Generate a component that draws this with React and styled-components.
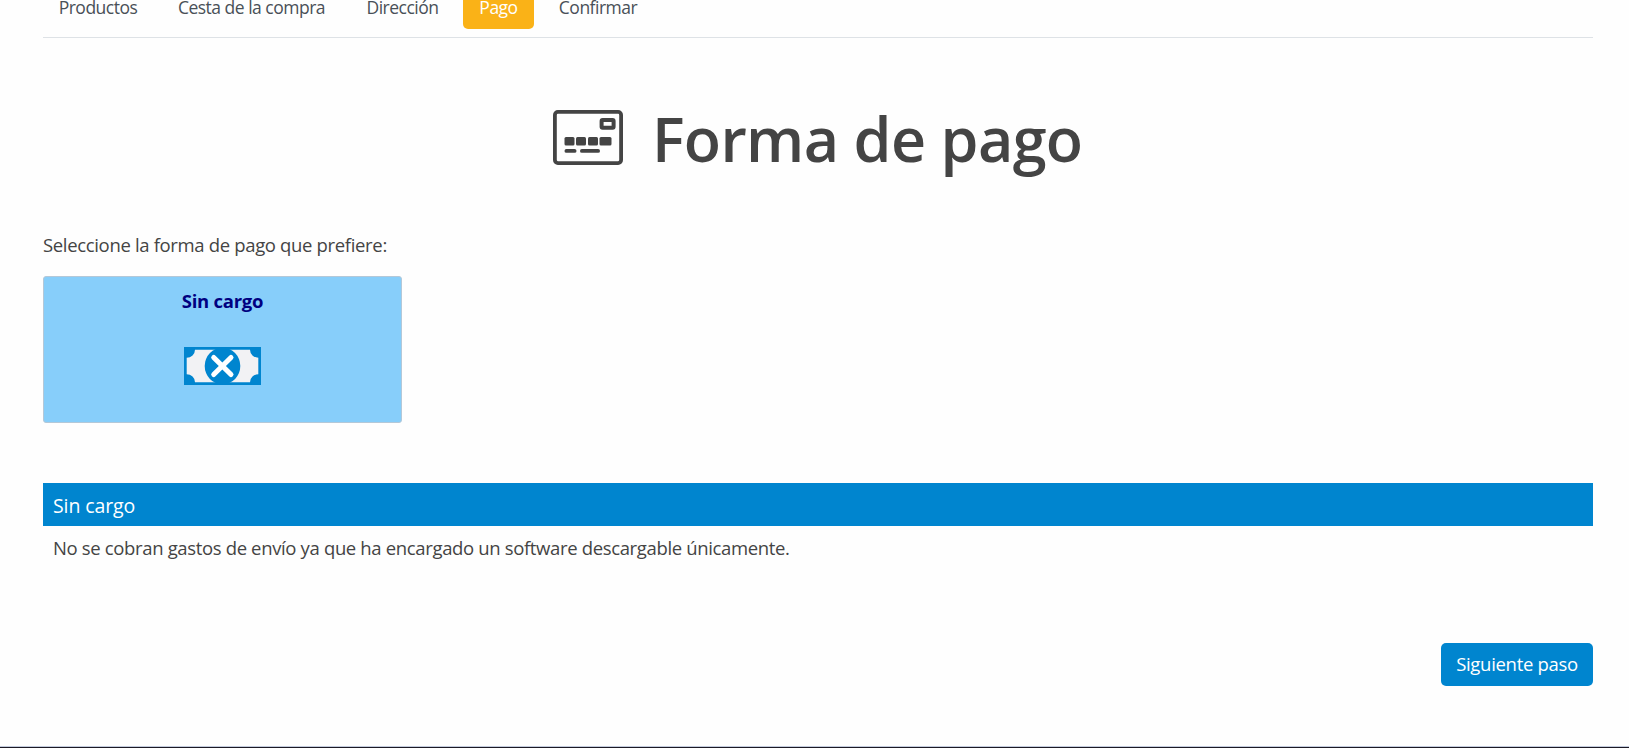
import React from 'react';
import styled, { createGlobalStyle } from 'styled-components';

const colors = {
  blue: '#0085cf',
  lightBlue: '#87cefa',
  yellow: '#fab217',
  text: '#444444',
  tab: '#495057',
  border: '#dee2e6',
};

const GlobalStyle = createGlobalStyle`
  * {
    box-sizing: border-box;
  }

  body {
    margin: 0;
    background-color: #fefefe;
    color: ${colors.text};
    font-family: 'Segoe UI', 'Open Sans', 'Noto Sans', sans-serif;
    font-size: 18.5px;
    overflow: hidden;
  }
`;

const PageWrapper = styled.div`
  display: flex;
  flex-direction: column;
  height: 748px;
  padding: 0 36px 0 43px;
  overflow: hidden;
  border-bottom: 1px solid #1c1a26;
  box-shadow: inset 0 -1px 0 #c3cbdc;
`;

const Steps = styled.nav`
  display: flex;
  flex: none;
  gap: 8px;
  height: 38px;
  border-bottom: 1px solid ${colors.border};
`;

const Step = styled.a`
  display: flex;
  justify-content: center;
  width: ${(props) => props.$width}px;
  height: 29px;
  border-radius: 0 0 5px 5px;
  background-color: ${(props) => (props.$active ? colors.yellow : 'transparent')};
  color: ${(props) => (props.$active ? '#fff' : colors.tab)};
  font-size: 17.5px;
  line-height: 14px;
  letter-spacing: -0.5px;
  white-space: nowrap;
`;

const Heading = styled.header`
  display: flex;
  align-items: center;
  flex: none;
  height: 84px;
  margin-top: 57px;
  padding-left: 510px;
`;

const Title = styled.h1`
  margin: 4px 0 0 29px;
  font-size: 61px;
  font-weight: 600;
  line-height: 84px;
  letter-spacing: -0.65px;
  white-space: nowrap;
`;

const Intro = styled.p`
  margin: 52px 0 0;
  line-height: 28px;
  letter-spacing: -0.34px;
`;

const PaymentCard = styled.button`
  display: flex;
  flex-direction: column;
  align-items: center;
  flex: none;
  width: 359px;
  height: 147px;
  margin-top: 17px;
  padding: 10px 0 0;
  border: 1px solid #b4c8d8;
  border-radius: 3px;
  background-color: ${colors.lightBlue};
  color: navy;
  font: inherit;
`;

const CardName = styled.span`
  font-weight: 700;
  line-height: 28px;
  letter-spacing: -0.25px;
  margin-bottom: 32px;
`;

const Details = styled.section`
  flex: none;
  margin-top: 60px;
`;

const DetailsTitle = styled.h2`
  height: 43px;
  margin: 0;
  padding: 0 10px;
  background-color: ${colors.blue};
  color: #fff;
  font-size: 19.5px;
  font-weight: 400;
  line-height: 46px;
  letter-spacing: -0.1px;
`;

const DetailsText = styled.p`
  margin: 8px 0 0;
  padding: 0 10px;
  line-height: 28px;
  letter-spacing: -0.35px;
`;

const NextButton = styled.button`
  flex: none;
  align-self: flex-end;
  width: 152px;
  height: 43px;
  margin-top: 81px;
  padding: 0 0 2px;
  border: none;
  border-radius: 5px;
  background-color: ${colors.blue};
  color: #fff;
  font: inherit;
  letter-spacing: -0.3px;
  white-space: nowrap;
`;

const steps = [
  { name: 'Productos', width: 110 },
  { name: 'Cesta de la compra', width: 181 },
  { name: 'Dirección', width: 105 },
  { name: 'Pago', width: 71, active: true },
  { name: 'Confirmar', width: 112 },
];

const CardIcon = () => (
  <svg width="70" height="55" viewBox="0 0 70 55" fill="none">
    <rect x="1.9" y="1.9" width="66.2" height="51.2" rx="3" stroke={colors.text} strokeWidth="3.8" />
    <rect x="48.6" y="10" width="12" height="7.8" rx="1" stroke={colors.text} strokeWidth="4" />
    <g fill={colors.text}>
      <rect x="11.5" y="27" width="10" height="8.5" rx="1.5" />
      <rect x="23" y="27" width="10" height="8.5" rx="1.5" />
      <rect x="35" y="27" width="10" height="8.5" rx="1.5" />
      <rect x="46.5" y="27" width="12" height="8.5" rx="1.5" />
      <rect x="11.5" y="39" width="12" height="3.8" rx="1.9" />
      <rect x="27" y="39" width="20" height="3.8" rx="1.9" />
    </g>
  </svg>
);

const FreeIcon = () => (
  <svg width="77" height="38" viewBox="0 0 77 39" preserveAspectRatio="none">
    <rect width="77" height="39" fill={colors.blue} />
    <path
      d="M11 2.8H66A8.3 8.3 0 0 0 74.3 11V28A8.3 8.3 0 0 0 66 36.2H11A8.3 8.3 0 0 0 2.7 28V11A8.3 8.3 0 0 0 11 2.8Z"
      fill="#f2f2f4"
    />
    <ellipse cx="38.5" cy="19.5" rx="17.8" ry="18.8" fill={colors.blue} />
    <path d="M29.7 10.7L47 28.3M47 10.7L29.7 28.3" stroke="#fff" strokeWidth="5" strokeLinecap="round" />
  </svg>
);

const PaymentPage = () => {
  return (
    <>
      <GlobalStyle />
      <PageWrapper>
        <Steps>
          {steps.map((step) => (
            <Step key={step.name} $width={step.width} $active={step.active}>
              {step.name}
            </Step>
          ))}
        </Steps>
        <Heading>
          <CardIcon />
          <Title>Forma de pago</Title>
        </Heading>
        <Intro>Seleccione la forma de pago que prefiere:</Intro>
        <PaymentCard>
          <CardName>Sin cargo</CardName>
          <FreeIcon />
        </PaymentCard>
        <Details>
          <DetailsTitle>Sin cargo</DetailsTitle>
          <DetailsText>
            No se cobran gastos de envío ya que ha encargado un software descargable únicamente.
          </DetailsText>
        </Details>
        <NextButton>Siguiente paso</NextButton>
      </PageWrapper>
    </>
  );
};

export default PaymentPage;
